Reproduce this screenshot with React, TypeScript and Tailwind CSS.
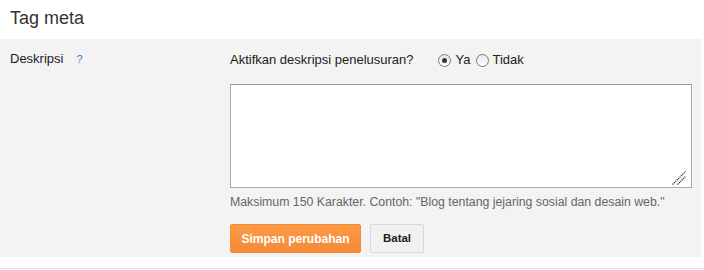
export default function App() {
  return (
    <div className="w-[704px] h-[270px] bg-white font-['Liberation_Sans',Arial,sans-serif] text-[13px] text-[#222]">
      {/* Header */}
      <div className="h-[39px] pl-[10px] pt-[6px]">
        <h2 className="text-[18px] leading-[24px] text-[#333]">Tag meta</h2>
      </div>

      {/* Panel */}
      <div className="w-[701px] h-[218px] bg-[#f3f3f3] flex">
        <div className="w-[230px] pl-[10px] pt-[12px] flex items-start">
          <span className="leading-[16px]">Deskripsi</span>
          <span className="ml-[13px] text-[11px] leading-[16px] text-[#3d7fd0]">?</span>
        </div>

        <div className="flex flex-col pt-[13px]">
          <div className="flex items-center h-[16px]">
            <span className="leading-[16px]">Aktifkan deskripsi penelusuran?</span>
            <label className="ml-[24px] flex items-center">
              <span className="w-[13px] h-[13px] rounded-full border border-[#7a7a7a] bg-gradient-to-b from-[#e8e8e8] to-white flex items-center justify-center">
                <span className="w-[5px] h-[5px] rounded-full bg-[#333]" />
              </span>
              <span className="ml-[5px]">Ya</span>
            </label>
            <label className="ml-[5px] flex items-center">
              <span className="w-[13px] h-[13px] rounded-full border border-[#7a7a7a] bg-gradient-to-b from-[#e8e8e8] to-white" />
              <span className="ml-[4px]">Tidak</span>
            </label>
          </div>

          <div className="relative mt-[16px] w-[462px] h-[104px] bg-white border border-[#a9a9a9] border-t-[#9a9a9a]">
            <svg className="absolute right-[5px] bottom-[2px]" width="14" height="14" viewBox="0 0 14 14">
              <line x1="0.5" y1="13.5" x2="13.5" y2="0.5" stroke="#222" strokeWidth="1.2" strokeDasharray="1.2 0.8" />
              <line x1="5.5" y1="13.5" x2="13.5" y2="5.5" stroke="#222" strokeWidth="1.2" strokeDasharray="1.2 0.8" />
            </svg>
          </div>

          <p className="mt-[6px] text-[12.3px] leading-[16px] text-[#666]">
            Maksimum 150 Karakter. Contoh: "Blog tentang jejaring sosial dan desain web."
          </p>

          <div className="mt-[14px] flex gap-[9px]">
            <button className="w-[131px] h-[29px] rounded-[2px] border border-[#f28c30] bg-gradient-to-b from-[#fd9a45] to-[#f6893a] text-white text-[12px] font-bold">
              Simpan perubahan
            </button>
            <button className="w-[54px] h-[29px] rounded-[2px] border border-[#d8d8d8] bg-[#f1f1f1] text-[#222] text-[11.5px] font-bold">
              Batal
            </button>
          </div>
        </div>
      </div>

      <div className="mt-[11px] h-px bg-[#e0e0e0]" />
    </div>
  );
}
